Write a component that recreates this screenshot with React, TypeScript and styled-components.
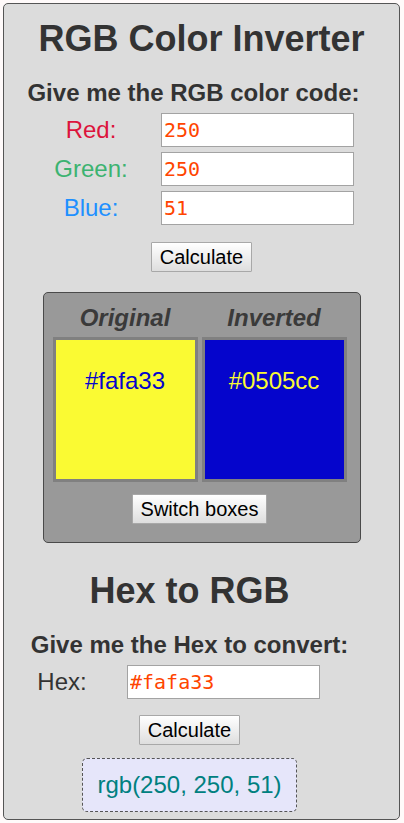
import React, { useState } from "react";
import styled, { createGlobalStyle } from "styled-components";

const GlobalStyle = createGlobalStyle`
  html, body {
    margin: 0;
    padding: 0;
    background: #fffafa;
  }
  body {
    padding: 3px 4px 3px 3px;
    font-family: "Liberation Sans", Arial, sans-serif;
    color: #333;
  }
`;

const Card = styled.main`
  background: #dcdcdc;
  border: 1px solid #555;
  border-radius: 5px;
  padding: 14px 0 7px;
  display: flex;
  flex-direction: column;
  align-items: center;
`;

const Section = styled.section<{ $shift?: number }>`
  align-self: stretch;
  display: flex;
  flex-direction: column;
  align-items: center;
  padding-right: ${(p) => p.$shift ?? 0}px;
`;

const Title = styled.h1<{ $top?: number }>`
  margin: ${(p) => p.$top ?? 0}px 0 0;
  font-size: 36px;
  line-height: 41px;
  font-weight: bold;
  color: #333;
`;

const Prompt = styled.h2<{ $shift?: number }>`
  margin: 20px 0 0;
  font-size: 24px;
  line-height: 28px;
  font-weight: bold;
  color: #333;
  padding-right: ${(p) => p.$shift ?? 0}px;
`;

const Rows = styled.div`
  align-self: stretch;
  margin: 6px 0 0 20px;
  display: flex;
  flex-direction: column;
  gap: 5px;
`;

const FormRow = styled.div<{ $labelWidth: number; $gap: number }>`
  display: grid;
  grid-template-columns: ${(p) => p.$labelWidth}px 193px;
  column-gap: ${(p) => p.$gap}px;
  align-items: center;
`;

const Label = styled.label<{ $color: string }>`
  text-align: center;
  font-size: 24px;
  line-height: 28px;
  color: ${(p) => p.$color};
`;

const Input = styled.input`
  box-sizing: border-box;
  width: 193px;
  height: 34px;
  margin: 0;
  padding: 0 2px;
  border: 1px solid #a3a3a3;
  background: #fff;
  font-family: "DejaVu Sans Mono", monospace;
  font-size: 20px;
  color: #ff4500;
  outline: none;
`;

const Button = styled.button<{ $top: number }>`
  margin-top: ${(p) => p.$top}px;
  height: 30px;
  padding: 0 8px;
  border: 1px solid #a8a8a8;
  border-radius: 1px;
  background: linear-gradient(#ffffff, #dedede);
  font-family: "Liberation Sans", Arial, sans-serif;
  font-size: 20px;
  line-height: 23px;
  color: #000;
  cursor: pointer;
`;

const Panel = styled.div`
  margin-top: 20px;
  width: 318px;
  box-sizing: border-box;
  background: #999;
  border: 1px solid #4a4a4a;
  border-radius: 5px;
  padding: 11px 13px 18px 9px;
  display: flex;
  flex-direction: column;
  align-items: center;
`;

const Columns = styled.div`
  display: flex;
  gap: 4px;
`;

const Column = styled.div`
  width: 145px;
  display: flex;
  flex-direction: column;
  align-items: center;
  gap: 5px;
`;

const ColumnHead = styled.h3`
  margin: 0;
  font-size: 24px;
  line-height: 28px;
  font-weight: bold;
  font-style: italic;
  color: #3a3a3a;
`;

const Swatch = styled.div<{ $bg: string; $fg: string }>`
  box-sizing: border-box;
  width: 145px;
  height: 145px;
  border: 3px solid #808080;
  background: ${(p) => p.$bg};
  color: ${(p) => p.$fg};
  padding-top: 27px;
  text-align: center;
  font-size: 24px;
  line-height: 28px;
`;

const Result = styled.output`
  margin-top: 13px;
  padding: 12px 14px;
  border: 1px dashed #555;
  border-radius: 5px;
  background: #e6e6fa;
  color: #008080;
  font-size: 24px;
  line-height: 28px;
`;

const toHex = (n: number) => n.toString(16).padStart(2, "0");

export default function App() {
  const [r, setR] = useState("250");
  const [g, setG] = useState("250");
  const [b, setB] = useState("51");
  const [hex, setHex] = useState("#fafa33");
  const [swapped, setSwapped] = useState(false);

  const orig = "#" + [r, g, b].map((v) => toHex(Number(v) || 0)).join("");
  const inv = "#" + [r, g, b].map((v) => toHex(255 - (Number(v) || 0))).join("");

  const boxes = [
    { head: "Original", bg: orig, fg: inv },
    { head: "Inverted", bg: inv, fg: orig },
  ];
  const shown = swapped ? [boxes[1], boxes[0]] : boxes;

  return (
    <>
      <GlobalStyle />
      <Card>
        <Section>
          <Title>RGB Color Inverter</Title>
          <Prompt $shift={16}>Give me the RGB color code:</Prompt>
          <Rows>
            <FormRow $labelWidth={134} $gap={3}>
              <Label $color="#dc143c">Red:</Label>
              <Input value={r} onChange={(e) => setR(e.target.value)} />
            </FormRow>
            <FormRow $labelWidth={134} $gap={3}>
              <Label $color="#3cb371">Green:</Label>
              <Input value={g} onChange={(e) => setG(e.target.value)} />
            </FormRow>
            <FormRow $labelWidth={134} $gap={3}>
              <Label $color="#1e90ff">Blue:</Label>
              <Input value={b} onChange={(e) => setB(e.target.value)} />
            </FormRow>
          </Rows>
          <Button $top={17}>Calculate</Button>
          <Panel>
            <Columns>
              {shown.map((x) => (
                <Column key={x.head}>
                  <ColumnHead>{x.head}</ColumnHead>
                  <Swatch $bg={x.bg} $fg={x.fg}>
                    {x.bg}
                  </Swatch>
                </Column>
              ))}
            </Columns>
            <Button $top={12} onClick={() => setSwapped((s) => !s)}>
              Switch boxes
            </Button>
          </Panel>
        </Section>
        <Section $shift={24}>
          <Title $top={27}>Hex to RGB</Title>
          <Prompt>Give me the Hex to convert:</Prompt>
          <Rows>
            <FormRow $labelWidth={76} $gap={27}>
              <Label $color="#333">Hex:</Label>
              <Input value={hex} onChange={(e) => setHex(e.target.value)} />
            </FormRow>
          </Rows>
          <Button $top={16}>Calculate</Button>
          <Result>rgb(250, 250, 51)</Result>
        </Section>
      </Card>
    </>
  );
}
